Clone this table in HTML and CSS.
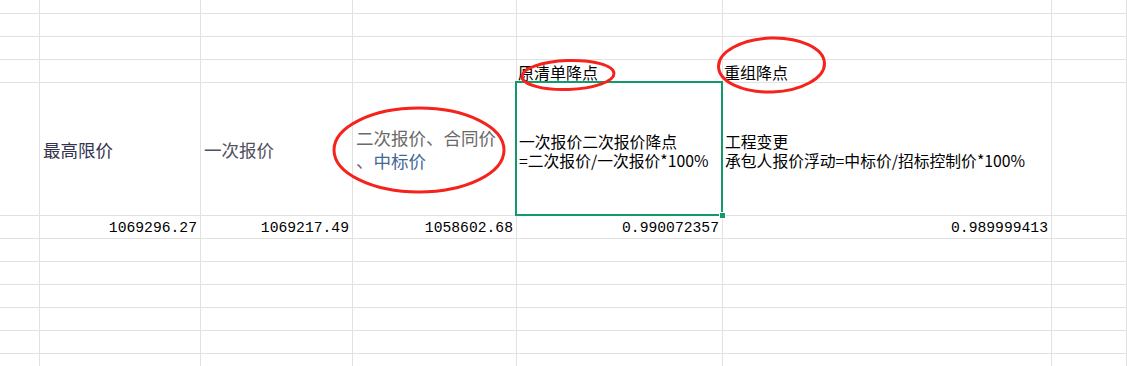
FILE: index.html
```html
<!DOCTYPE html>
<html lang="zh-CN">
<head>
<meta charset="utf-8">
<title>Sheet</title>
<link rel="stylesheet" href="styles.css">
</head>
<body>
<div class="page">
  <div class="sheet">
    <div class="c"></div><div class="c"></div><div class="c"></div><div class="c"></div><div class="c"></div><div class="c"></div><div class="c"></div>
    <div class="c"></div><div class="c"></div><div class="c"></div><div class="c"></div><div class="c"></div><div class="c"></div><div class="c"></div>
    <div class="c"></div><div class="c"></div><div class="c"></div><div class="c"></div><div class="c"></div><div class="c"></div><div class="c"></div>

    <div class="c"></div><div class="c"></div><div class="c"></div><div class="c"></div>
    <div class="c label">原清单降点</div>
    <div class="c label">重组降点</div>
    <div class="c"></div>

    <div class="c"></div>
    <div class="c head h1">最高限价</div>
    <div class="c head h2">一次报价</div>
    <div class="c head h3"><span>二次报价、合同价<br>、<span class="blue">中标价</span></span></div>
    <div class="c note selected"><span>一次报价二次报价降点<br>=二次报价/一次报价*100%</span></div>
    <div class="c note"><span>工程变更<br>承包人报价浮动=中标价/招标控制价*100%</span></div>
    <div class="c"></div>

    <div class="c"></div>
    <div class="c num">1069296.27</div>
    <div class="c num">1069217.49</div>
    <div class="c num">1058602.68</div>
    <div class="c num">0.990072357</div>
    <div class="c num">0.989999413</div>
    <div class="c"></div>

    <div class="c"></div><div class="c"></div><div class="c"></div><div class="c"></div><div class="c"></div><div class="c"></div><div class="c"></div>
    <div class="c"></div><div class="c"></div><div class="c"></div><div class="c"></div><div class="c"></div><div class="c"></div><div class="c"></div>
    <div class="c"></div><div class="c"></div><div class="c"></div><div class="c"></div><div class="c"></div><div class="c"></div><div class="c"></div>
    <div class="c"></div><div class="c"></div><div class="c"></div><div class="c"></div><div class="c"></div><div class="c"></div><div class="c"></div>
    <div class="c"></div><div class="c"></div><div class="c"></div><div class="c"></div><div class="c"></div><div class="c"></div><div class="c"></div>
    <div class="c"></div><div class="c"></div><div class="c"></div><div class="c"></div><div class="c"></div><div class="c"></div><div class="c"></div>
  </div>
  <svg class="marks" width="1127" height="366" viewBox="0 0 1127 366" aria-hidden="true">
    <ellipse cx="419" cy="150" rx="85" ry="42" />
    <ellipse cx="568" cy="75" rx="46" ry="14.5" transform="rotate(-2 568 75)" />
    <ellipse cx="771.5" cy="65" rx="53" ry="27" transform="rotate(-2 771.5 65)" />
  </svg>
</div>
</body>
</html>
```
FILE: styles.css
```css
html, body {
  margin: 0;
  padding: 0;
  background: #ffffff;
  overflow: hidden;
}

.page {
  position: relative;
  width: 1127px;
  height: 366px;
  overflow: hidden;
  font-family: "Noto Sans CJK SC", sans-serif;
}

.sheet {
  display: grid;
  grid-template-columns: 40px 161px 152px 164px 206px 329px 1fr;
  grid-template-rows: 14px 23px 23px 23px 133px 23px 23px 23px 23px 23px 23px 23px;
}

.c {
  box-sizing: border-box;
  border-right: 1px solid #e1e1e1;
  border-bottom: 1px solid #e1e1e1;
  min-width: 0;
  display: flex;
  white-space: nowrap;
}

.label {
  align-items: flex-end;
  font-size: 16px;
  line-height: 18px;
  color: #000;
  padding-left: 1px;
  padding-bottom: 1px;
  overflow: visible;
}

.head {
  align-items: center;
  font-size: 17.5px;
  line-height: 23px;
  padding-left: 3px;
}

.h1 { color: #34344e; }
.h2 { color: #505060; }
.h3 { color: #6a6a6a; }
.blue { color: #3f6a98; }

.note {
  align-items: center;
  font-size: 15.8px;
  line-height: 19px;
  color: #000;
  padding-left: 2px;
  padding-top: 3px;
}

.selected {
  position: relative;
}

.selected::after {
  content: "";
  position: absolute;
  left: -2px;
  top: -2px;
  right: -1px;
  bottom: -1px;
  border: 2px solid #139a6a;
  pointer-events: none;
}

.selected::before {
  content: "";
  position: absolute;
  right: -4px;
  bottom: -4px;
  width: 5px;
  height: 5px;
  background: #139a6a;
  border: 1px solid #ffffff;
  z-index: 2;
}

.num {
  justify-content: flex-end;
  align-items: center;
  font-family: "Liberation Mono", monospace;
  font-size: 14.7px;
  color: #000;
  padding-right: 3px;
  padding-top: 2px;
}

.marks {
  position: absolute;
  left: 0;
  top: 0;
  pointer-events: none;
}

.marks ellipse {
  fill: none;
  stroke: #f5231c;
  stroke-width: 3;
}
```
